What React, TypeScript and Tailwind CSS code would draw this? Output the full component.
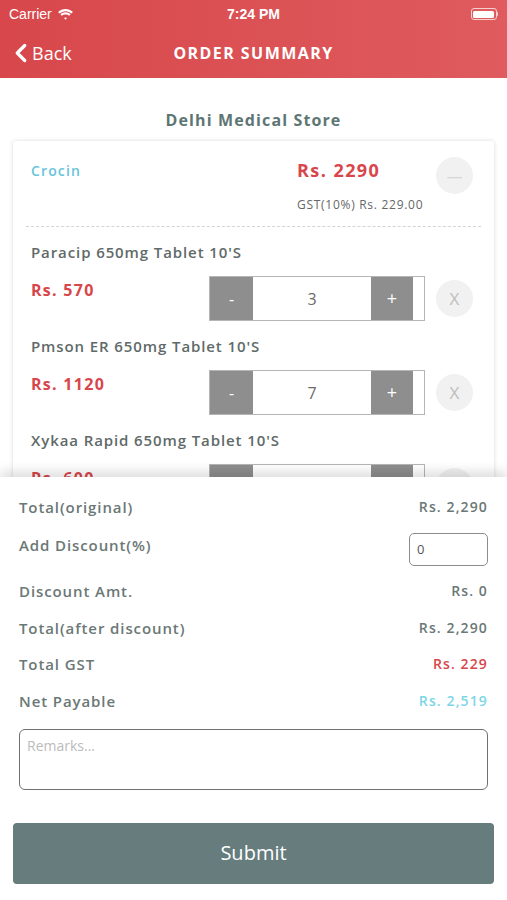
import { ChevronLeft } from "lucide-react";

const font = { fontFamily: '"Open Sans", "Noto Sans", sans-serif' };

const items = [
  { name: "Paracip 650mg Tablet 10'S", price: "Rs. 570", qty: 3 },
  { name: "Pmson ER 650mg Tablet 10'S", price: "Rs. 1120", qty: 7 },
  { name: "Xykaa Rapid 650mg Tablet 10'S", price: "Rs. 600", qty: 1 },
];

const Wifi = () => (
  <svg width="17" height="13" viewBox="0 0 17 13" fill="white">
    <path d="M8.5 3.2c2.3 0 4.4.9 6 2.4l1.4-1.5C13.9 2.2 11.3 1.1 8.5 1.1S3.1 2.2 1.1 4.1l1.4 1.5c1.6-1.5 3.7-2.4 6-2.4z" />
    <path d="M8.5 6.4c1.4 0 2.7.5 3.7 1.4l1.4-1.5C12.3 5 10.5 4.3 8.5 4.3S4.7 5 3.4 6.3l1.4 1.5c1-.9 2.3-1.4 3.7-1.4z" />
    <path d="M8.5 9.5c.6 0 1.1.2 1.5.6L8.5 11.7 7 10.1c.4-.4.9-.6 1.5-.6z" />
  </svg>
);

const Stepper = ({ qty }: { qty: number }) => (
  <div className="flex h-[45px] w-[216px] border border-[#b5b5b5] bg-white">
    <div className="flex w-[43px] items-center justify-center bg-[#8e8e8e] text-[16px] text-white">-</div>
    <div className="flex flex-1 items-center justify-center text-[16px] text-[#6b6b6b]">{qty}</div>
    <div className="flex w-[42px] items-center justify-center bg-[#8e8e8e] text-[18px] text-white">+</div>
    <div className="w-[11px]" />
  </div>
);

const Row = ({ label, value, color = "text-[#6b7876]" }: { label: string; value: string; color?: string }) => (
  <div className="flex items-center justify-between leading-[22px]">
    <span className="text-[15px] font-semibold tracking-[0.06em] text-[#6b7876]">{label}</span>
    <span className={`text-[14px] font-semibold tracking-[0.08em] ${color}`}>{value}</span>
  </div>
);

export default function App() {
  return (
    <div className="flex h-[900px] w-[507px] flex-col overflow-hidden bg-white" style={font}>
      <div className="bg-gradient-to-r from-[#d7474b] to-[#df5b5e] text-white">
        <div className="relative flex h-[28px] items-center px-[9px] text-[14px]">
          <span className="flex items-center gap-[5px]" style={{ fontFamily: '"Liberation Sans", sans-serif' }}>
            Carrier <Wifi />
          </span>
          <span className="absolute left-1/2 -translate-x-1/2 font-semibold" style={{ fontFamily: '"Liberation Sans", sans-serif' }}>
            7:24 PM
          </span>
          <div className="ml-auto flex items-center">
            <div className="h-[12px] w-[26px] rounded-[3px] border border-white/70 p-[1.5px]">
              <div className="h-full w-full rounded-[1.5px] bg-white" />
            </div>
            <div className="h-[4px] w-[1.5px] rounded-r bg-white/70" />
          </div>
        </div>
        <div className="relative flex h-[50px] items-center">
          <div className="flex items-center pl-[6px]">
            <ChevronLeft size={30} strokeWidth={2.6} />
            <span className="-ml-[4px] text-[18px]">Back</span>
          </div>
          <span className="absolute left-1/2 -translate-x-1/2 text-[16px] font-bold tracking-[0.09em]">ORDER SUMMARY</span>
        </div>
      </div>

      <div className="h-[399px] overflow-hidden">
        <div className="pt-[30px] text-center text-[16px] font-bold leading-[24px] tracking-[0.07em] text-[#5d7673]">Delhi Medical Store</div>
        <div className="mx-[13px] mt-[9px] rounded-[3px] bg-white pl-[18px] pr-[21px] shadow-[0_0_4px_rgba(0,0,0,0.15)]">
          <div className="flex pt-[16px] pb-[12px]">
            <span className="flex-1 pt-[3px] text-[14px] font-semibold leading-[22px] tracking-[0.08em] text-[#69c4da]">Crocin</span>
            <div className="w-[139px]">
              <div className="text-[18px] font-bold leading-[26px] tracking-[0.08em] text-[#d8464b]">Rs. 2290</div>
              <div className="mt-[13px] text-[12px] leading-[18px] tracking-[0.06em] text-[#666]">GST(10%) Rs. 229.00</div>
            </div>
            <div className="flex h-[37px] w-[37px] items-center justify-center rounded-full bg-[#f1f1f1] text-[#d6d6d6]">—</div>
          </div>
          <div className="-ml-[5px] -mr-[8px] border-t border-dashed border-[#d4d4d4]" />
          {items.map((it) => (
            <div key={it.name} className="pt-[14px]">
              <div className="text-[15px] font-semibold leading-[22px] tracking-[0.06em] text-[#5f6a69]">{it.name}</div>
              <div className="mt-[13px] flex items-start">
                <span className="flex-1 pt-[2px] text-[16px] font-bold leading-[24px] tracking-[0.08em] text-[#d8464b]">{it.price}</span>
                <Stepper qty={it.qty} />
                <div className="ml-[11px] mt-[4px] flex h-[37px] w-[37px] items-center justify-center rounded-full bg-[#f1f1f1] text-[17px] text-[#bdbdbd]">
                  X
                </div>
              </div>
            </div>
          ))}
        </div>
      </div>

      <div className="relative z-10 flex flex-1 flex-col bg-white px-[19px] pt-[19px] shadow-[0_-6px_10px_rgba(0,0,0,0.12)]">
        <Row label="Total(original)" value="Rs. 2,290" />
        <div className="mt-[15px] flex items-start justify-between">
          <span className="pt-[1px] text-[15px] font-semibold leading-[22px] tracking-[0.06em] text-[#6b7876]">Add Discount(%)</span>
          <div className="flex h-[33px] w-[79px] items-center rounded-[5px] border-[1.5px] border-[#8d8d8d] px-[7px] text-[13px] text-[#555]">0</div>
        </div>
        <div className="mt-[14px] flex flex-col gap-[14.5px]">
          <Row label="Discount Amt." value="Rs. 0" />
          <Row label="Total(after discount)" value="Rs. 2,290" />
          <Row label="Total GST" value="Rs. 229" color="text-[#d8464b]" />
          <Row label="Net Payable" value="Rs. 2,519" color="text-[#7dd6e6]" />
        </div>
        <div className="mt-[17px] h-[61px] rounded-[6px] border-[1.5px] border-[#707070] px-[7px] pt-[5px] text-[14px] text-[#bcbcbc]">
          Remarks...
        </div>
        <div className="-mx-[6px] mt-[33px] flex h-[61px] items-center justify-center rounded-[4px] bg-[#667c7d] text-[20px] text-white">
          Submit
        </div>
      </div>
    </div>
  );
}
